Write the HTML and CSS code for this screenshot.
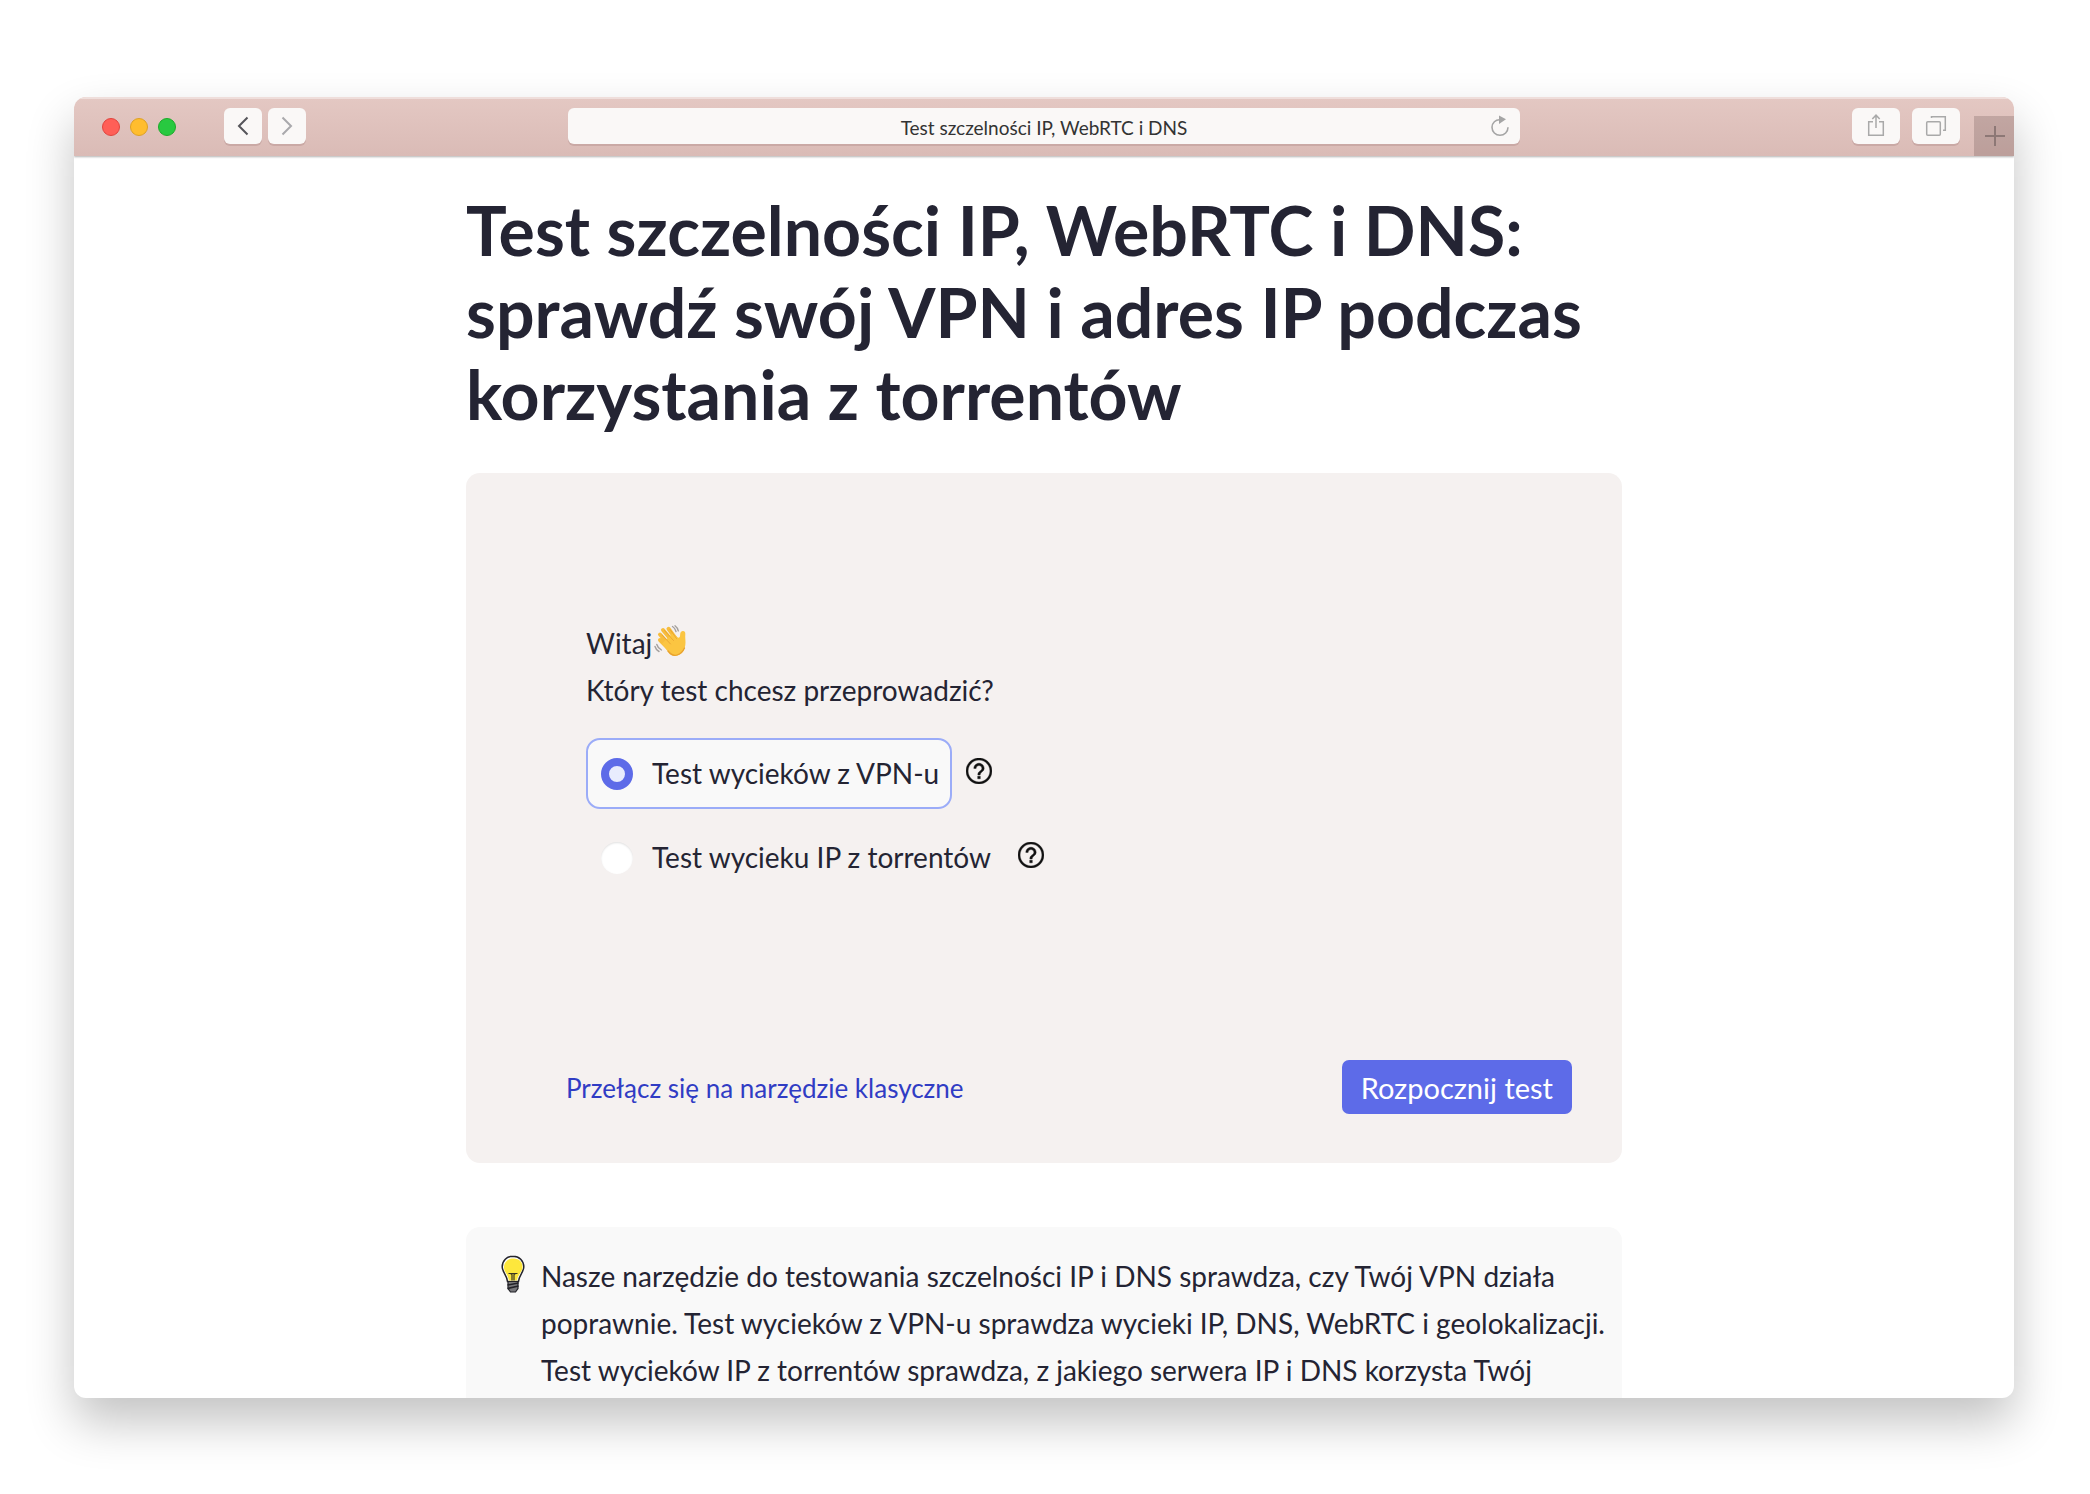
FILE: index.html
```
<!DOCTYPE html>
<html lang="pl">
<head>
    <meta charset="UTF-8">
    <meta name="viewport" content="width=device-width, initial-scale=1.0">
    <title>Test szczelności IP, WebRTC i DNS</title>
    <link rel="stylesheet" href="styles.css">
</head>
<body>
    <div class="window">
        <header class="toolbar">
            <div class="toolbar-left">
                <div class="lights">
                    <span class="light red"></span>
                    <span class="light yellow"></span>
                    <span class="light green"></span>
                </div>
                <div class="nav-buttons">
                    <button type="button" class="bar-btn" aria-label="Wstecz">
                        <svg width="38" height="36" viewBox="0 0 38 36" fill="none" stroke="#55555a" stroke-width="2"><path d="M23.500 9.500L15 18l8.500 8.500"/></svg>
                    </button>
                    <button type="button" class="bar-btn" aria-label="Dalej">
                        <svg width="38" height="36" viewBox="0 0 38 36" fill="none" stroke="#a9a9ac" stroke-width="2"><path d="M14.500 9.500L23 18l-8.500 8.500"/></svg>
                    </button>
                </div>
            </div>
            <div class="address">
                <input type="text" class="address-input" aria-label="Adres" value="Test szczelności IP, WebRTC i DNS" readonly>
                <button type="button" class="reload" aria-label="Odśwież">
                    <svg width="20" height="24" viewBox="0 0 20 24" fill="none" stroke="#a5a5a5" stroke-width="1.600"><path d="M10.500 5.800C5.500 5.200 2 9 2 13.300a8 8 0 0 0 16 0"/><path d="M9 1.500v8.500l7-4.800z" fill="#a5a5a5" stroke="none"/></svg>
                </button>
            </div>
            <div class="toolbar-right">
                <button type="button" class="bar-btn wide" aria-label="Udostępnij">
                    <svg width="48" height="36" viewBox="0 0 48 36" fill="none" stroke="#a9a9a9" stroke-width="1.500"><path d="M21 13.700h-4.300v13.600h14.600V13.700H27M24 20V7.500M20.300 11L24 7.200l3.700 3.800"/></svg>
                </button>
                <button type="button" class="bar-btn wide" aria-label="Karty">
                    <svg width="48" height="36" viewBox="0 0 48 36" fill="none" stroke="#a9a9a9" stroke-width="1.500"><rect x="14.700" y="13.700" width="13.600" height="13.600" rx="1"/><path d="M19.500 10V8.700h13.800v13.600H31"/></svg>
                </button>
                <button type="button" class="new-tab" aria-label="Nowa karta">
                    <svg width="40" height="40" viewBox="0 0 40 40" stroke="#8d7876" stroke-width="2"><path d="M11 20h20M21 10v20"/></svg>
                </button>
            </div>
        </header>

        <main class="content">
            <h1>Test szczelności IP, WebRTC i DNS: sprawdź swój VPN i adres IP podczas korzystania z torrentów</h1>

            <form class="test-card">
                <fieldset class="question">
                    <legend>
                        <span class="greeting">Witaj
                            <svg class="wave" width="32" height="32" viewBox="0 0 32 32">
                                <g fill="none" stroke="#a39f9d" stroke-width="1.400" stroke-linecap="round"><path d="M18.500 1.500q2.500 1.500 3.500 5M21 .800q2.500 1.800 3.300 5M1 21.500q1 3.500 4 5M2.800 19.500q1 3.500 4.600 5.500"/></g>
                                <g stroke="#f7bd3c" stroke-width="4" stroke-linecap="round"><path d="M6 15l8 8M6 9.500l10 11M9 5l10 12M14.500 3.800l8 11"/></g>
                                <path d="M8 18.500L19 8l4.500 4.500c1.800.500 2.700-.500 2.600-2.500.100-2 .700-3.700 2.500-4 2-.200 3 1 2.700 3.500-.300 2.300.200 5 .200 8 0 8-5 14-11.500 13.500C16 30.500 13 25 8 18.500z" fill="#fbc541"/>
                                <path d="M6 11l8.500 9M8.500 6.500l9 10M14 5.500l6.500 9" fill="none" stroke="#e39a2c" stroke-width=".700" stroke-linecap="round" transform="translate(2 -1)"/>
                                <path d="M14 26c3 4 6 5 9 4 3.500-1 6-3.500 7.500-7" fill="none" stroke="#e8a22f" stroke-width="1.300" stroke-linecap="round"/>
                            </svg>
                        </span>
                        <span class="prompt">Który test chcesz przeprowadzić?</span>
                    </legend>
                    <div class="option">
                        <label class="choice"><input type="radio" name="test" value="vpn" checked>Test wycieków z VPN-u</label>
                        <button type="button" class="help" aria-label="Pomoc: test wycieków z VPN-u">
                            <svg width="26" height="26" viewBox="2 2 20 20" fill="#111" stroke="#111" stroke-width=".300"><path d="M11 18h2v-2h-2v2zm1-16C6.480 2 2 6.480 2 12s4.480 10 10 10 10-4.480 10-10S17.520 2 12 2zm0 18.400c-4.640 0-8.400-3.760-8.400-8.400S7.360 3.600 12 3.600s8.400 3.760 8.400 8.400-3.760 8.400-8.400 8.400zm0-14.400c-2.210 0-4 1.790-4 4h1.800c0-1.200.980-2.200 2.200-2.200s2.200 1 2.200 2.200c0 2-3.100 1.750-3.100 5h1.800c0-2.250 3.100-2.500 3.100-5 0-2.210-1.790-4-4-4z"/></svg>
                        </button>
                    </div>
                    <div class="option">
                        <label class="choice"><input type="radio" name="test" value="torrent">Test wycieku IP z torrentów</label>
                        <button type="button" class="help" aria-label="Pomoc: test wycieku IP z torrentów">
                            <svg width="26" height="26" viewBox="2 2 20 20" fill="#111" stroke="#111" stroke-width=".300"><path d="M11 18h2v-2h-2v2zm1-16C6.480 2 2 6.480 2 12s4.480 10 10 10 10-4.480 10-10S17.520 2 12 2zm0 18.400c-4.640 0-8.400-3.760-8.400-8.400S7.360 3.600 12 3.600s8.400 3.760 8.400 8.400-3.760 8.400-8.400 8.400zm0-14.400c-2.210 0-4 1.790-4 4h1.800c0-1.200.980-2.200 2.200-2.200s2.200 1 2.200 2.200c0 2-3.100 1.750-3.100 5h1.800c0-2.250 3.100-2.500 3.100-5 0-2.210-1.790-4-4-4z"/></svg>
                        </button>
                    </div>
                </fieldset>
                <div class="actions">
                    <a href="#" class="switch-link">Przełącz się na narzędzie klasyczne</a>
                    <button type="submit" class="start-btn">Rozpocznij test</button>
                </div>
            </form>

            <section class="info">
                <svg class="bulb" width="24" height="38" viewBox="0 0 24 38">
                    <path d="M12 1.200C5.800 1.200 1.200 5.800 1.200 12c0 5 4.600 7.500 5.300 14.500h11C18.200 19.500 22.800 17 22.800 12c0-6.200-4.600-10.800-10.800-10.800z" fill="#fff" stroke="#24242c" stroke-width="1.500"/>
                    <path d="M13 3.500C7 3 3 7 3 12.500c0 4.500 4.300 7 4.800 13h8.400c.500-6 5.300-8.500 5.300-13.500 0-5-3.500-8.500-8.500-8.500z" fill="#fde73c"/>
                    <path d="M7.500 18.500h9M9.500 18.500l1.500 1v6M14.500 18.500l-1.500 1v6" fill="none" stroke="#3a3620" stroke-width="1.200"/>
                    <path d="M7 26.500h10v7l-2.500 3.500h-5L7 33.500z" fill="#77777b" stroke="#222228" stroke-width="1.200"/>
                    <path d="M6.500 30l11-2M6.500 33.500l11-2.500" stroke="#222228" stroke-width="1.500"/>
                </svg>
                <p>Nasze narzędzie do testowania szczelności IP i DNS sprawdza, czy Twój VPN działa poprawnie. Test wycieków z VPN-u sprawdza wycieki IP, DNS, WebRTC i geolokalizacji. Test wycieków IP z torrentów sprawdza, z jakiego serwera IP i DNS korzysta Twój</p>
            </section>
        </main>
    </div>
</body>
</html>
```
FILE: styles.css
```
:root {
  --ink: #242433;
  --accent: #5d6be8;
  --btn-bg: #faf8f7;
}

* {
  box-sizing: border-box;
}

body {
  margin: 0;
  height: 100vh;
  padding: 97px 76px 96px 74px;
  background: #fff;
  color: var(--ink);
  font-family: Lato, "Liberation Sans", sans-serif;
  font-size: 28px;
  line-height: 47px;
}

button {
  padding: 0;
  border: none;
  background: none;
  font: inherit;
  cursor: pointer;
}

svg {
  display: block;
}

/* Browser window */
.window {
  height: 100%;
  overflow: hidden;
  background: #fff;
  border-radius: 12px;
  box-shadow: 0 24px 48px rgba(0, 0, 0, 0.24);
}

.toolbar {
  display: grid;
  grid-template-columns: 1fr 952px 1fr;
  height: 59px;
  padding-top: 11px;
  background: linear-gradient(#e4c8c3, #dabbb6);
  box-shadow: inset 0 2px 0 #efdedb, 0 1px 2px rgba(0, 0, 0, 0.3);
}

.toolbar-left,
.lights,
.nav-buttons,
.toolbar-right {
  display: flex;
}

.toolbar-left {
  gap: 48px;
  height: 38px;
  padding-left: 28px;
}

.lights {
  align-items: center;
  gap: 10px;
}

.light {
  width: 18px;
  height: 18px;
  border: 1px solid;
  border-radius: 50%;
}

.red { background: #ff5f57; border-color: #e0443e; }
.yellow { background: #ffbd2e; border-color: #dea123; }
.green { background: #28c940; border-color: #1aab29; }

.nav-buttons {
  gap: 6px;
}

.bar-btn,
.address {
  height: 36px;
  background: var(--btn-bg);
  border-radius: 6px;
  box-shadow: 0 2px 0 #caa9a5;
}

.bar-btn {
  width: 38px;
}

.bar-btn.wide {
  width: 48px;
}

.address {
  display: grid;
  grid-template-columns: 40px 1fr 40px;
  align-items: center;
}

.address-input {
  grid-column: 2;
  min-width: 0;
  height: 36px;
  padding: 2px 0 0;
  border: none;
  background: none;
  outline: none;
  color: #333;
  font-family: inherit;
  font-size: 19px;
  text-align: center;
}

.reload {
  justify-self: center;
}

.toolbar-right {
  justify-content: flex-end;
  gap: 12px;
}

.new-tab {
  width: 40px;
  height: 40px;
  margin-top: 8px;
  margin-left: 2px;
  background: rgba(80, 60, 60, 0.22);
}

/* Page */
.content {
  max-width: 1156px;
  margin: 0 auto;
  padding-top: 33px;
}

h1 {
  margin: 0 0 38px;
  font-size: 68px;
  line-height: 82px;
  font-weight: 700;
}

.test-card {
  display: flex;
  flex-direction: column;
  justify-content: space-between;
  min-height: 690px;
  margin-bottom: 64px;
  padding: 147px 50px 49px 100px;
  background: #f5f1f0;
  border-radius: 14px;
}

.question {
  display: flex;
  flex-direction: column;
  gap: 13px;
  margin: 0 0 0 20px;
  padding: 0;
  border: none;
}

legend {
  padding: 0 0 24px;
}

.greeting {
  display: flex;
  gap: 2px;
}

.wave {
  margin-top: 5px;
}

.option {
  display: flex;
  align-items: center;
  gap: 14px;
}

.choice {
  display: flex;
  align-items: center;
  gap: 19px;
  height: 71px;
  padding: 0 11px 0 13px;
  border: 2px solid transparent;
  border-radius: 14px;
}

.choice:has(input:checked) {
  background: #f9f9f9;
  border-color: #9bacf8;
}

.choice input {
  appearance: none;
  width: 32px;
  height: 32px;
  margin: 0;
  border-radius: 50%;
  background: #fff;
  box-shadow: inset 0 1px 2px rgba(0, 0, 0, 0.12);
}

.choice input:checked {
  border: 8px solid var(--accent);
  background: #e8ecfd;
  box-shadow: none;
}

.help {
  padding-bottom: 6px;
}

.actions {
  display: flex;
  align-items: center;
  justify-content: space-between;
}

.switch-link {
  padding-top: 2px;
  color: #303cc4;
  font-size: 26px;
  text-decoration: none;
}

.start-btn {
  height: 54px;
  padding: 0 19px;
  border-radius: 7px;
  background: var(--accent);
  color: #fff;
  font-size: 29px;
}

.info {
  display: flex;
  align-items: flex-start;
  gap: 16px;
  padding: 26px 8px 26px 35px;
  background: #f9f9f9;
  border-radius: 14px;
}

.bulb {
  flex: none;
  margin-top: 2px;
}

.info p {
  margin: 0;
}
```
